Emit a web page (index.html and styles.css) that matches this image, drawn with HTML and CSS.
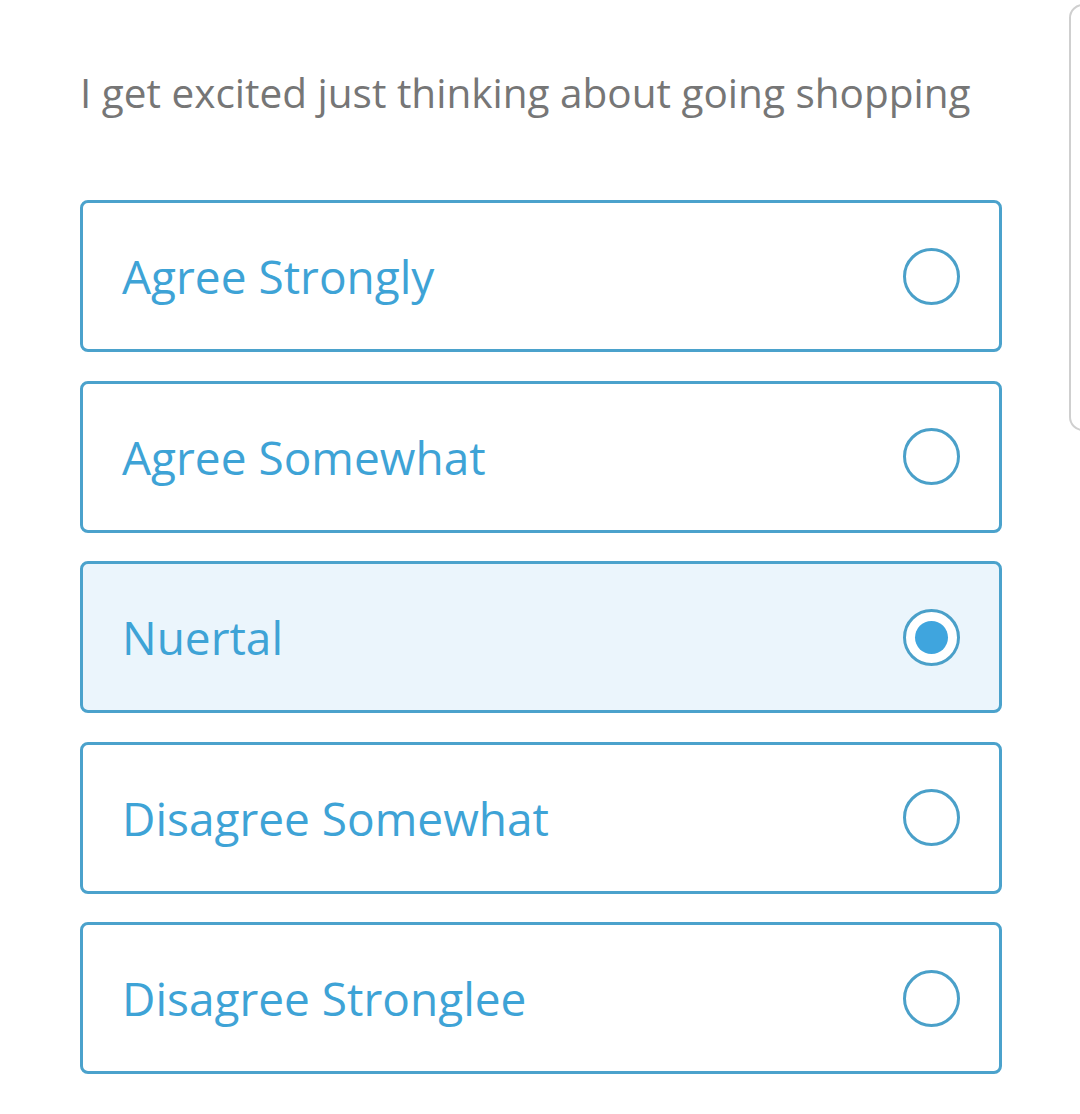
FILE: index.html
```html
<!DOCTYPE html>
<html>
<head>
<meta charset="utf-8">
<link rel="stylesheet" href="styles.css">
</head>
<body>
<div class="page">
  <p class="question">I get excited just thinking about going shopping</p>
  <div class="options">
    <div class="option"><span class="label">Agree Strongly</span><span class="radio"></span></div>
    <div class="option"><span class="label">Agree Somewhat</span><span class="radio"></span></div>
    <div class="option selected"><span class="label">Nuertal</span><span class="radio"></span></div>
    <div class="option"><span class="label">Disagree Somewhat</span><span class="radio"></span></div>
    <div class="option"><span class="label">Disagree Stronglee</span><span class="radio"></span></div>
  </div>
</div>
<div class="sidepanel"></div>
</body>
</html>
```
FILE: styles.css
```css
html, body {
  margin: 0;
  padding: 0;
  background: #ffffff;
}
body {
  font-family: "Open Sans", "Noto Sans", sans-serif;
  width: 1080px;
  height: 1114px;
  overflow: hidden;
  position: relative;
}
.page {
  padding: 63px 0 0 80px;
  width: 922px;
}
.question {
  margin: 0;
  font-size: 40.5px;
  line-height: 60px;
  color: #767676;
  white-space: nowrap;
}
.options {
  margin-top: 77px;
  display: flex;
  flex-direction: column;
  gap: 28.5px;
}
.option {
  box-sizing: border-box;
  height: 152px;
  border: 3px solid #4ba2cc;
  border-radius: 8px;
  display: flex;
  align-items: center;
  justify-content: space-between;
  padding: 0 39px 0 39px;
  background: #ffffff;
}
.option.selected {
  background: #ebf5fc;
}
.label {
  font-size: 46px;
  color: #3ea3d6;
}
.radio {
  box-sizing: border-box;
  width: 57px;
  height: 57px;
  border: 3px solid #4aa0c9;
  border-radius: 50%;
  background: #ffffff;
  display: flex;
  align-items: center;
  justify-content: center;
}
.selected .radio::after {
  content: "";
  width: 33px;
  height: 33px;
  border-radius: 50%;
  background: #3fa5de;
}
.sidepanel {
  position: absolute;
  left: 1069px;
  top: 4px;
  width: 40px;
  height: 427px;
  box-sizing: border-box;
  border: 2px solid #cfcfcf;
  border-radius: 14px;
}
```
